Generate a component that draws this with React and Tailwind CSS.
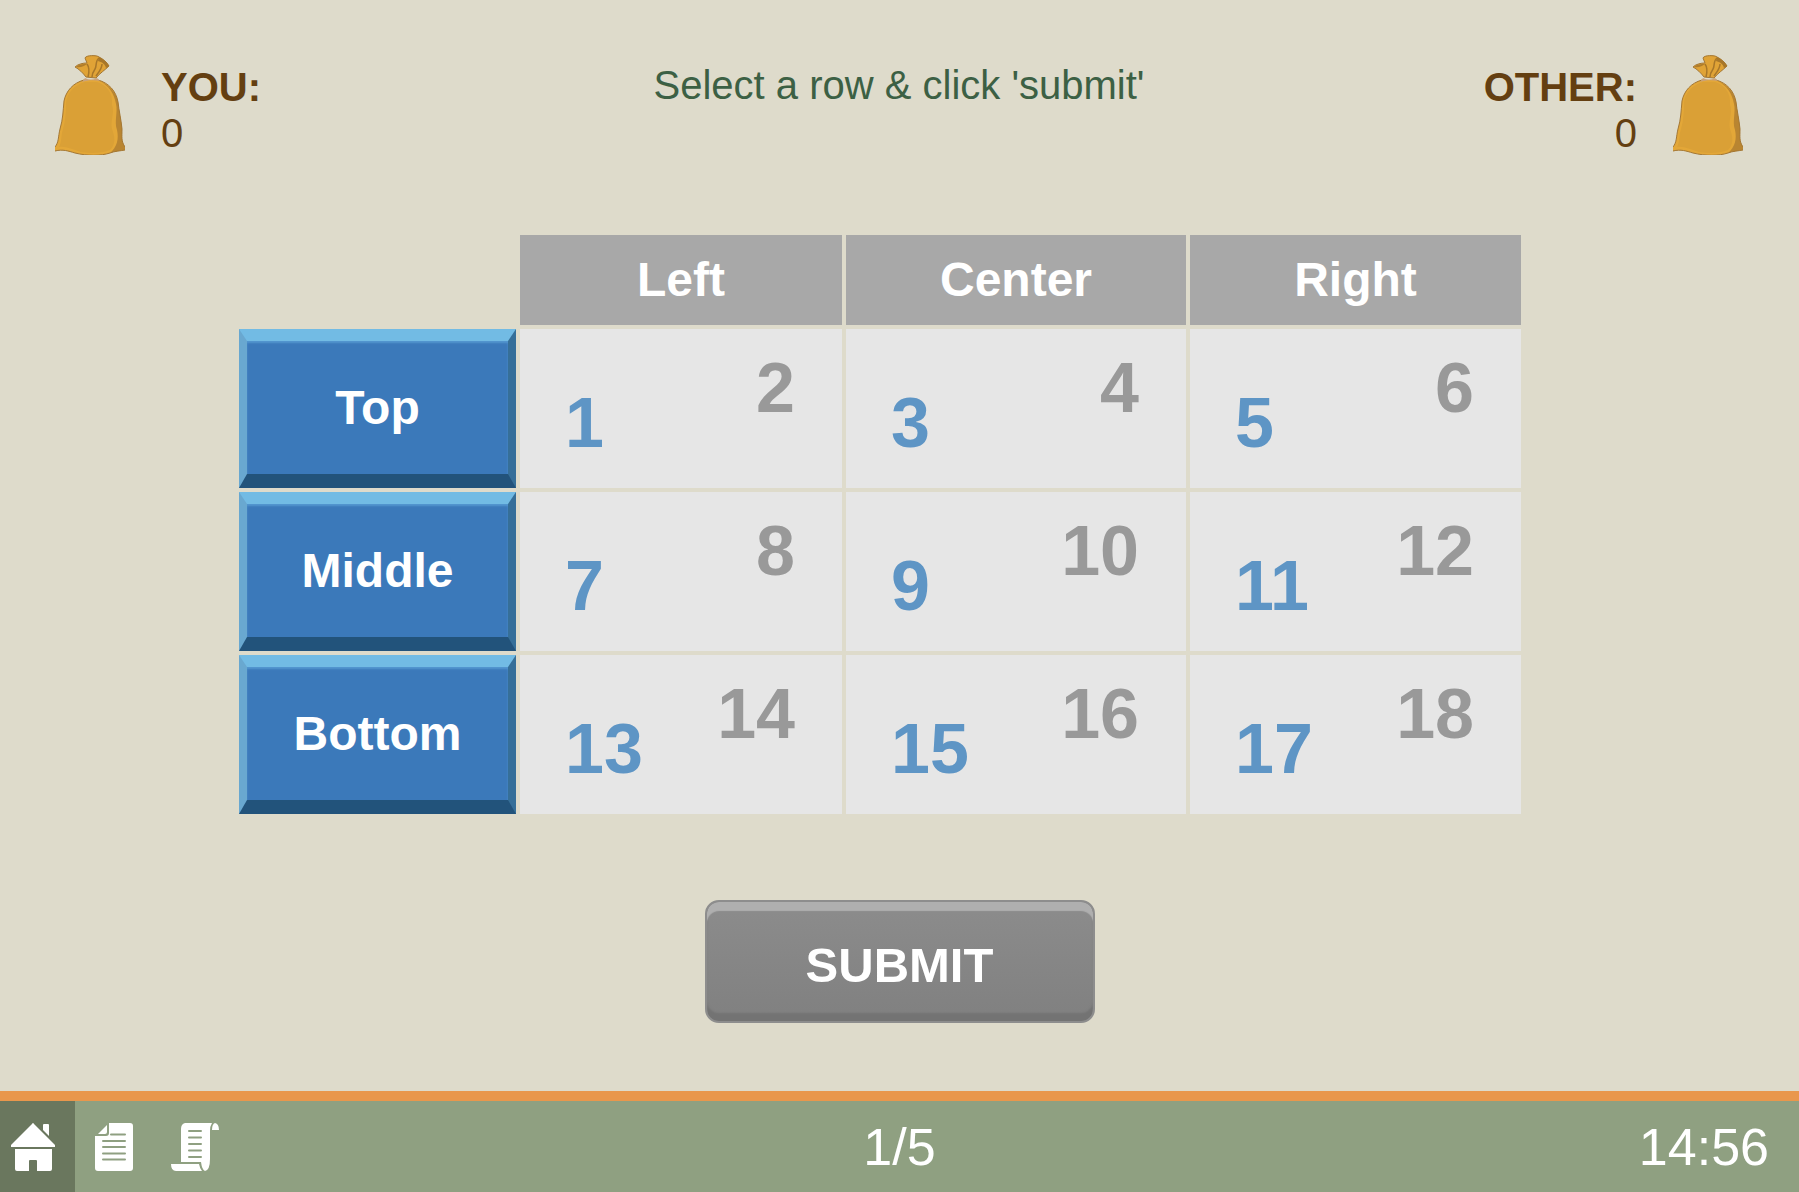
import React, { useState } from "react";

const ROWS = [
  { name: "Top", cells: [[1, 2], [3, 4], [5, 6]] },
  { name: "Middle", cells: [[7, 8], [9, 10], [11, 12]] },
  { name: "Bottom", cells: [[13, 14], [15, 16], [17, 18]] },
];
const COLUMNS = ["Left", "Center", "Right"];

function MoneyBag() {
  return (
    <svg viewBox="0 0 70 100" className="h-[100px] w-[70px] shrink-0" aria-hidden="true">
      <path
        d="M29 25 C18 28 11 36 9 46 C8 56 8 64 5 74 C3 82 4 87 0 92 L0 96 C8 94 13 96 20 98 C32 101 46 101 55 98 C60 96 65 96 70 95 L70 92 C66 86 67 82 67 74 C66 64 64 56 63 47 C61 36 54 28 43 25 Z"
        fill="#e3a738"
      />
      <path
        d="M45 26 C54 30 61 37 63 47 C64 56 66 64 67 74 C67 82 66 86 70 92 L70 95 C65 96 60 96 55 98 C62 92 64 84 62 75 C59 66 63 57 61 49 C59 38 54 31 45 26 Z"
        fill="#b98531"
      />
      <path
        d="M30 27 C19 30 12 38 11 48 C11 60 10 68 7 78 C6 85 6 89 4 92 C12 91 18 95 26 97 C36 99 48 98 55 95 C61 89 60 82 57 74 C55 66 60 58 57 50 C58 38 52 30 42 27 Z"
        fill="#daa036"
      />
      <path
        d="M29 25 C18 28 11 36 9 46 C8 56 8 64 5 74 C3 82 4 87 0 92 M0 96 C8 94 13 96 20 98 C32 101 46 101 55 98 C60 96 65 96 70 95 M43 25 C54 28 61 36 63 47 C64 56 66 64 67 74 C67 82 66 86 70 92"
        fill="none"
        stroke="#a37735"
        strokeWidth="1"
      />
      <path
        d="M31 22 C28 18 24 14 20 12 C23 9 28 8 32 8 L30 3 C31 0 42 0 44 2 C48 4 52 7 54 11 C50 15 45 18 41 23 Z"
        fill="#e0a336"
        stroke="#a37735"
        strokeWidth="1"
      />
      <path d="M21 12 C24 9 28 9 32 9 C29 11 26 13 21 12 Z" fill="#b07d2c" />
      <path d="M44 2 C48 4 52 7 54 11 L51 13 C50 9 47 7 43 6 Z" fill="#a87729" />
      <path
        d="M32 9 C35 13 34 18 33 22 M44 3 C40 6 42 11 40 14 C38 17 37 19 37 22 M47 9 C47 14 43 18 41 21"
        fill="none"
        stroke="#a87729"
        strokeWidth="1.5"
      />
      <path d="M30 23 C34 25 38 25 42 23 L45 26 C39 25 33 25 27 27 Z" fill="#c9a27c" />
    </svg>
  );
}

function HouseIcon() {
  return (
    <svg viewBox="0 0 44 48" className="h-12 w-11" aria-hidden="true" fill="#fff">
      <path d="M21 1 Q22 -1 23 1 L44 22 V24 H0 V22 Z" />
      <path d="M32 2 Q32 1 33 1 H37 Q38 1 38 2 V13 L32 7 Z" />
      <path d="M4 26 H41 V46 Q41 48 39 48 H26 V38 Q26 37 25 37 H19 Q18 37 18 38 V48 H6 Q4 48 4 46 Z" />
    </svg>
  );
}

function PageIcon() {
  return (
    <svg viewBox="0 0 38 48" className="h-12 w-[38px]" aria-hidden="true">
      <path d="M14 0 H35 Q38 0 38 3 V45 Q38 48 35 48 H3 Q0 48 0 45 V13 H11 Q14 13 14 10 Z" fill="#fff" />
      <path d="M12 2 V9 Q12 11 10 11 H3 Z" fill="#fff" />
      <path d="M16 11.5 H30 M8 18 H30 M8 24 H30 M8 30.5 H30 M8 36.5 H30" stroke="#8fa081" strokeWidth="2" strokeLinecap="round" />
    </svg>
  );
}

function ScrollIcon() {
  return (
    <svg viewBox="0 0 48 48" className="size-12" aria-hidden="true">
      <path d="M14 0 H41 Q39 3 39 8 V36 Q39 47 34 48 Q31 47 30 39 H10 V6 Q10 1 14 0 Z" fill="#fff" />
      <path d="M41 7 Q41 1 44 0 Q48 1 48 7 Z" fill="#fff" />
      <path d="M0 41 H28 Q29 46 31 48 H5 Q0 48 0 41 Z" fill="#fff" />
      <path d="M18 8 H30 M18 14.5 H30 M18 21 H30 M18 27.5 H30 M18 34 H30" stroke="#8fa081" strokeWidth="2" strokeLinecap="round" />
    </svg>
  );
}

export default function App() {
  const [selected, setSelected] = useState(null);

  return (
    <div className="flex min-h-screen flex-col bg-[#dedbcb] font-['Helvetica','Liberation_Sans',Arial,sans-serif]">
      <header className="grid grid-cols-[1fr_auto_1fr] px-14 pt-[55px] pl-[55px] text-[40px] leading-[46px]">
        <div className="flex gap-9 text-[#643f11]">
          <MoneyBag />
          <div className="pt-[9px]">
            <div className="font-bold">YOU:</div>
            <div>0</div>
          </div>
        </div>
        <h1 className="pt-[7px] text-[#3c6044]">Select a row &amp; click 'submit'</h1>
        <div className="flex justify-end gap-9 text-right text-[#643f11]">
          <div className="pt-[9px]">
            <div className="font-bold">OTHER:</div>
            <div>0</div>
          </div>
          <MoneyBag />
        </div>
      </header>

      <main className="flex flex-1 flex-col">
        <div className="mt-[75px] pr-[274px] pl-[235px]">
          <table className="w-full table-fixed border-separate border-spacing-1 font-bold">
            <colgroup>
              <col className="w-[277px]" />
              <col className="w-[322px]" />
              <col className="w-[340px]" />
              <col className="w-[331px]" />
            </colgroup>
            <thead>
              <tr>
                <td className="p-0" />
                {COLUMNS.map((name) => (
                  <th key={name} scope="col" className="h-[90px] bg-[#a8a8a8] p-0 text-5xl leading-none text-white">
                    {name}
                  </th>
                ))}
              </tr>
            </thead>
            <tbody>
              {ROWS.map((row) => (
                <tr key={row.name}>
                  <th scope="row" className="p-0">
                    <button
                      type="button"
                      aria-pressed={selected === row.name}
                      onClick={() => setSelected(row.name)}
                      className="block h-[159px] w-full border-x-8 border-t-[12px] border-b-[14px] border-t-[#72bbe4] border-r-[#366f98] border-b-[#22537b] border-l-[#69a8d0] bg-[#3b79ba] text-5xl leading-none text-white shadow-[inset_0_2px_2px_#5396cf]"
                    >
                      {row.name}
                    </button>
                  </th>
                  {row.cells.map(([you, other]) => (
                    <td key={you} className="bg-[#e6e6e6] p-0">
                      <div className="flex h-[159px] justify-between pt-6 pr-[47px] pb-[30px] pl-[45px] text-[70px] leading-none">
                        <span className="self-end text-[#5e95c5]">{you}</span>
                        <span className="self-start text-[#999999]">{other}</span>
                      </div>
                    </td>
                  ))}
                </tr>
              ))}
            </tbody>
          </table>
        </div>

        <button
          type="button"
          className="mt-[82px] h-[123px] w-[390px] self-center rounded-[14px] border-2 border-[#8d8d8d] bg-linear-to-b from-[#8c8c8c] to-[#808080] pt-2 text-[49px] leading-none font-bold text-white shadow-[inset_0_9px_1px_#afafaf,inset_0_-8px_2px_#737373]"
        >
          SUBMIT
        </button>
      </main>

      <footer className="grid h-[101px] grid-cols-[1fr_auto_1fr] items-stretch border-t-10 border-[#e9974c] bg-[#8fa081] text-[52px] leading-none text-white">
        <nav className="flex">
          <button type="button" aria-label="Home" className="flex w-[75px] items-center bg-[#6a775e] pl-[11px]">
            <HouseIcon />
          </button>
          <button type="button" aria-label="Instructions" className="flex items-center pr-[19px] pl-5">
            <PageIcon />
          </button>
          <button type="button" aria-label="History" className="flex items-center pl-[19px]">
            <ScrollIcon />
          </button>
        </nav>
        <div className="self-center">1/5</div>
        <div className="self-center pr-[30px] text-right">14:56</div>
      </footer>
    </div>
  );
}
